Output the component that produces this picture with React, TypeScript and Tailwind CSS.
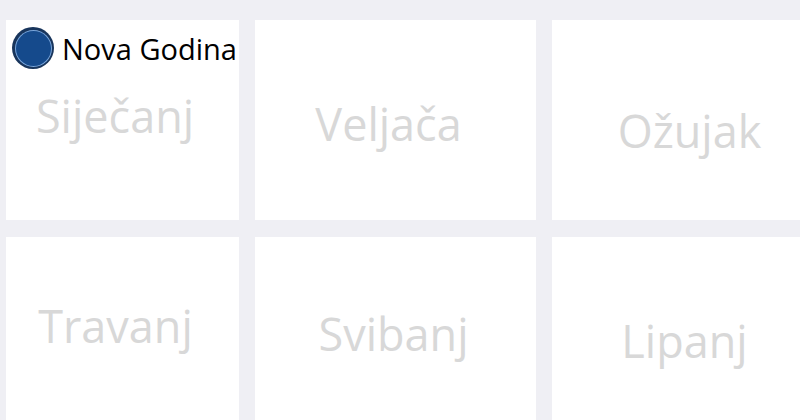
const months = [
  { name: "Siječanj", shift: "pb-[10px] pr-[15px]" },
  { name: "Veljača", shift: "pt-[6px] pr-[14px]" },
  { name: "Ožujak", shift: "pt-[20px] pr-[6px]" },
  { name: "Travanj", shift: "pb-[24px] pr-[14px]" },
  { name: "Svibanj", shift: "pb-[8px] pr-[4px]" },
  { name: "Lipanj", shift: "pt-[6px] pr-[16px]" },
];

function HolidayBadge() {
  return (
    <div className="absolute left-[6px] top-[7px] flex items-center gap-[8px]">
      <span className="flex h-[42px] w-[42px] items-center justify-center rounded-full bg-[#18355c]">
        <span className="flex h-[37px] w-[37px] items-center justify-center rounded-full bg-[#79a6dc]">
          <span className="h-[35px] w-[35px] rounded-full bg-[#154a8c]" />
        </span>
      </span>
      <span className="text-[29px] leading-none text-black">Nova Godina</span>
    </div>
  );
}

export default function App() {
  return (
    <div
      className="h-[420px] w-[800px] overflow-hidden bg-[#efeff4] pl-[6px] pt-5"
      style={{ fontFamily: '"Open Sans", "Noto Sans", sans-serif' }}
    >
      <div className="grid grid-cols-[233px_281px_281px] grid-rows-[200px_200px] gap-x-4 gap-y-[17px]">
        {months.map((m, i) => (
          <div
            key={m.name}
            className={`relative flex items-center justify-center bg-white ${m.shift}`}
          >
            {i === 0 && <HolidayBadge />}
            <span className="text-[45px] leading-none text-[#d8d8d8]">{m.name}</span>
          </div>
        ))}
      </div>
    </div>
  );
}
